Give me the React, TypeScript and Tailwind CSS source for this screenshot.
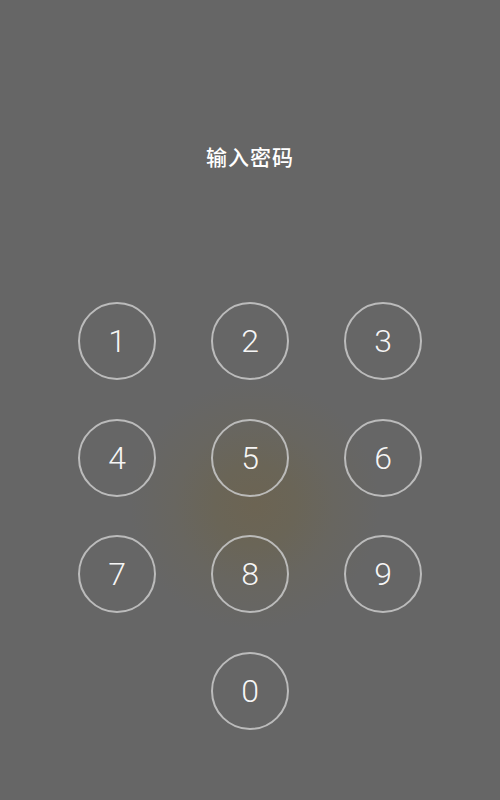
import React from 'react';

const keys = ['1', '2', '3', '4', '5', '6', '7', '8', '9'];

const Key: React.FC<{ label: string }> = ({ label }) => (
  <button className="w-[78px] h-[78px] rounded-full border-2 border-[#c4c4c4]/90 flex items-center justify-center text-[32px] font-light text-white/95 leading-none">
    {label}
  </button>
);

export default function App() {
  return (
    <div
      className="w-[500px] h-[800px] bg-[#666666] bg-[radial-gradient(circle_at_255px_505px,#6c6453_0px,#6a6557_40px,#686660_80px,#666666_125px)] flex flex-col items-center select-none"
      style={{ fontFamily: 'Roboto, "Noto Sans CJK SC", sans-serif' }}
    >
      <h1 className="mt-[145px] text-[21px] leading-[26px] font-medium text-white tracking-[1px]">输入密码</h1>

      <div className="mt-[131px] grid grid-cols-[78px_78px_78px] gap-x-[55px] gap-y-[38.5px]">
        {keys.map((k) => (
          <Key key={k} label={k} />
        ))}
        <div />
        <Key label="0" />
        <div />
      </div>
    </div>
  );
}
